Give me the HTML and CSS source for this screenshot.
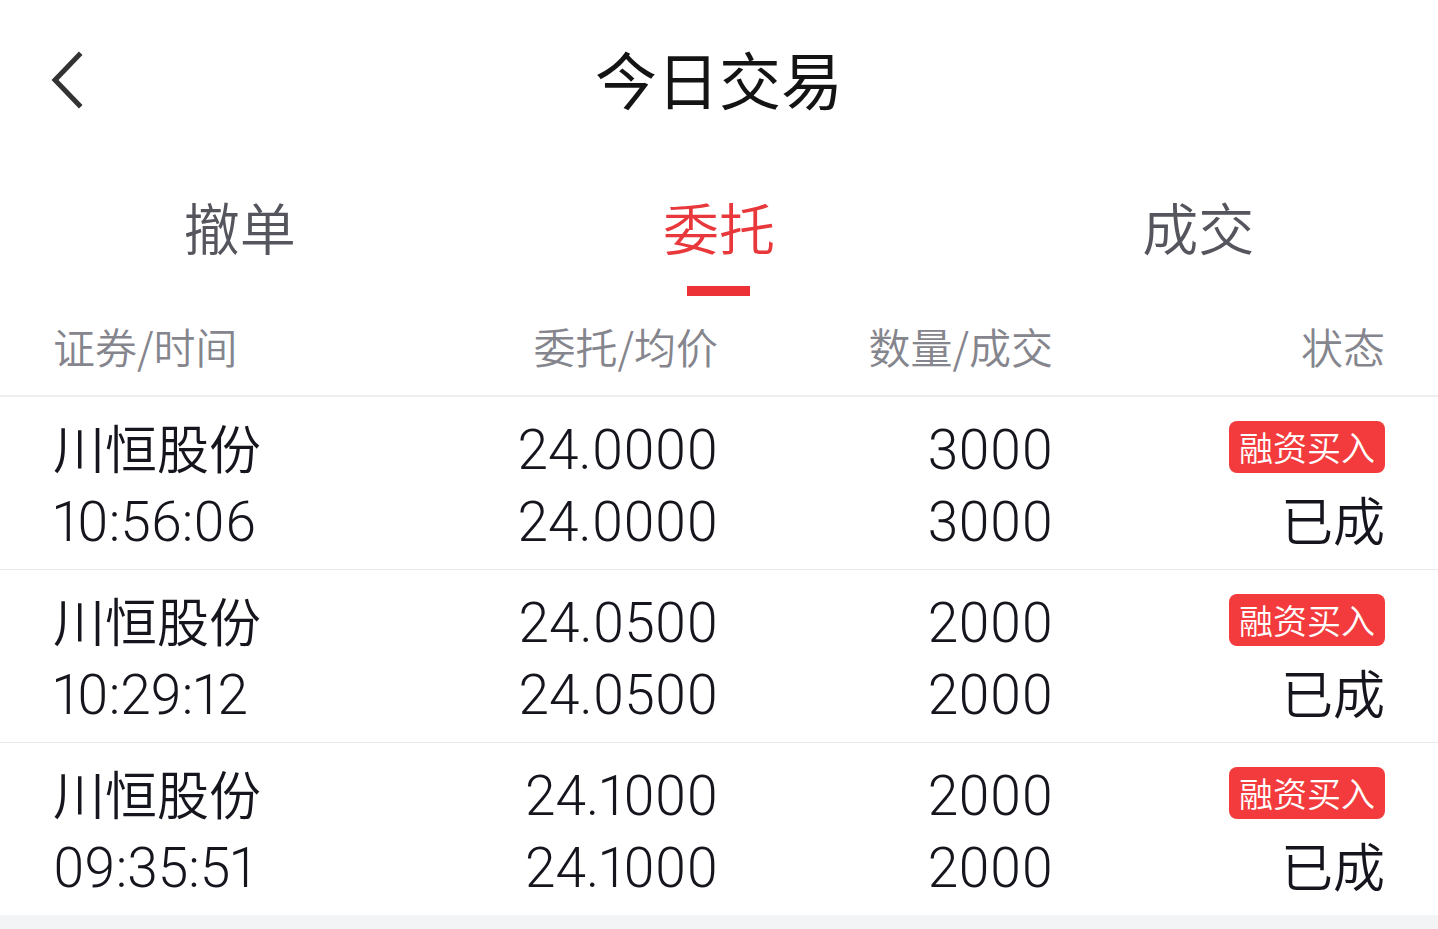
FILE: index.html
```html
<!DOCTYPE html>
<html lang="zh-CN">
<head>
<meta charset="utf-8">
<title>今日交易</title>
<link rel="stylesheet" href="styles.css">
</head>
<body>
<div class="page">
  <header class="nav">
    <svg class="back" viewBox="0 0 40 60" width="40" height="60">
      <path d="M31 5 L7 30 L31 55" fill="none" stroke="#333" stroke-width="5" stroke-linecap="square"/>
    </svg>
    <h1 class="title">今日交易</h1>
  </header>
  <nav class="tabs">
    <div class="tab">撤单</div>
    <div class="tab active">委托<span class="bar"></span></div>
    <div class="tab">成交</div>
  </nav>
  <div class="thead">
    <div class="c1">证券/时间</div>
    <div class="c2">委托/均价</div>
    <div class="c3">数量/成交</div>
    <div class="c4">状态</div>
  </div>
  <div class="row">
    <div class="c1"><div>川恒股份</div><div class="num">10:56:06</div></div>
    <div class="c2 num"><div>24.0000</div><div>24.0000</div></div>
    <div class="c3 num"><div>3000</div><div>3000</div></div>
    <div class="c4"><div><span class="badge">融资买入</span></div><div>已成</div></div>
  </div>
  <div class="row">
    <div class="c1"><div>川恒股份</div><div class="num">10:29:12</div></div>
    <div class="c2 num"><div>24.0500</div><div>24.0500</div></div>
    <div class="c3 num"><div>2000</div><div>2000</div></div>
    <div class="c4"><div><span class="badge">融资买入</span></div><div>已成</div></div>
  </div>
  <div class="row">
    <div class="c1"><div>川恒股份</div><div class="num">09:35:51</div></div>
    <div class="c2 num"><div>24.1000</div><div>24.1000</div></div>
    <div class="c3 num"><div>2000</div><div>2000</div></div>
    <div class="c4"><div><span class="badge">融资买入</span></div><div>已成</div></div>
  </div>
</div>
</body>
</html>
```

FILE: styles.css
```css
html, body {
  margin: 0;
  padding: 0;
}
body {
  background: #f3f4f6;
  font-family: "Noto Sans CJK SC", "Noto Sans", sans-serif;
  font-weight: 350;
  color: #15151d;
}
.page {
  background: #fff;
}
.nav {
  position: relative;
  height: 164px;
  box-sizing: border-box;
  padding-bottom: 8px;
  display: flex;
  align-items: center;
  justify-content: center;
}
.back {
  position: absolute;
  left: 48px;
  top: 50px;
}
.title {
  margin: 0;
  font-size: 62px;
  font-weight: 400;
  line-height: 1;
  color: #141414;
}
.tabs {
  display: grid;
  grid-template-columns: 1fr 1fr 1fr;
  height: 136px;
}
.tab {
  display: flex;
  flex-direction: column;
  align-items: center;
  padding-top: 34px;
  font-size: 56px;
  line-height: 1;
  color: #55555d;
}
.tab.active {
  color: #e8383b;
}
.bar {
  display: block;
  width: 63px;
  height: 10px;
  margin-top: 32px;
  background: #ec3237;
}
.thead, .row {
  display: grid;
  grid-template-columns: 332px 333px 335px 1fr;
  padding: 0 53px;
}
.thead {
  height: 97px;
  box-sizing: border-box;
  padding-bottom: 4px;
  align-items: center;
  font-size: 42px;
  line-height: 1;
  color: #85858d;
  border-bottom: 2px solid #eeeeee;
}
.row {
  padding-top: 14px;
  padding-bottom: 14px;
  border-bottom: 1px solid #e9e9e9;
  font-size: 52px;
  line-height: 72px;
}
.row:last-child {
  border-bottom: none;
}
.num {
  font-family: Roboto, "Noto Sans", sans-serif;
  font-weight: 300;
  font-size: 55px;
  font-variant-numeric: proportional-nums;
  position: relative;
  top: 3px;
}
.c2, .c3, .c4 {
  text-align: right;
}
.badge {
  display: inline-block;
  vertical-align: middle;
  height: 52px;
  line-height: 52px;
  padding: 0 10px;
  border-radius: 8px;
  background: #f33b3d;
  color: #fff;
  font-size: 34px;
  position: relative;
  top: -8px;
}
```
